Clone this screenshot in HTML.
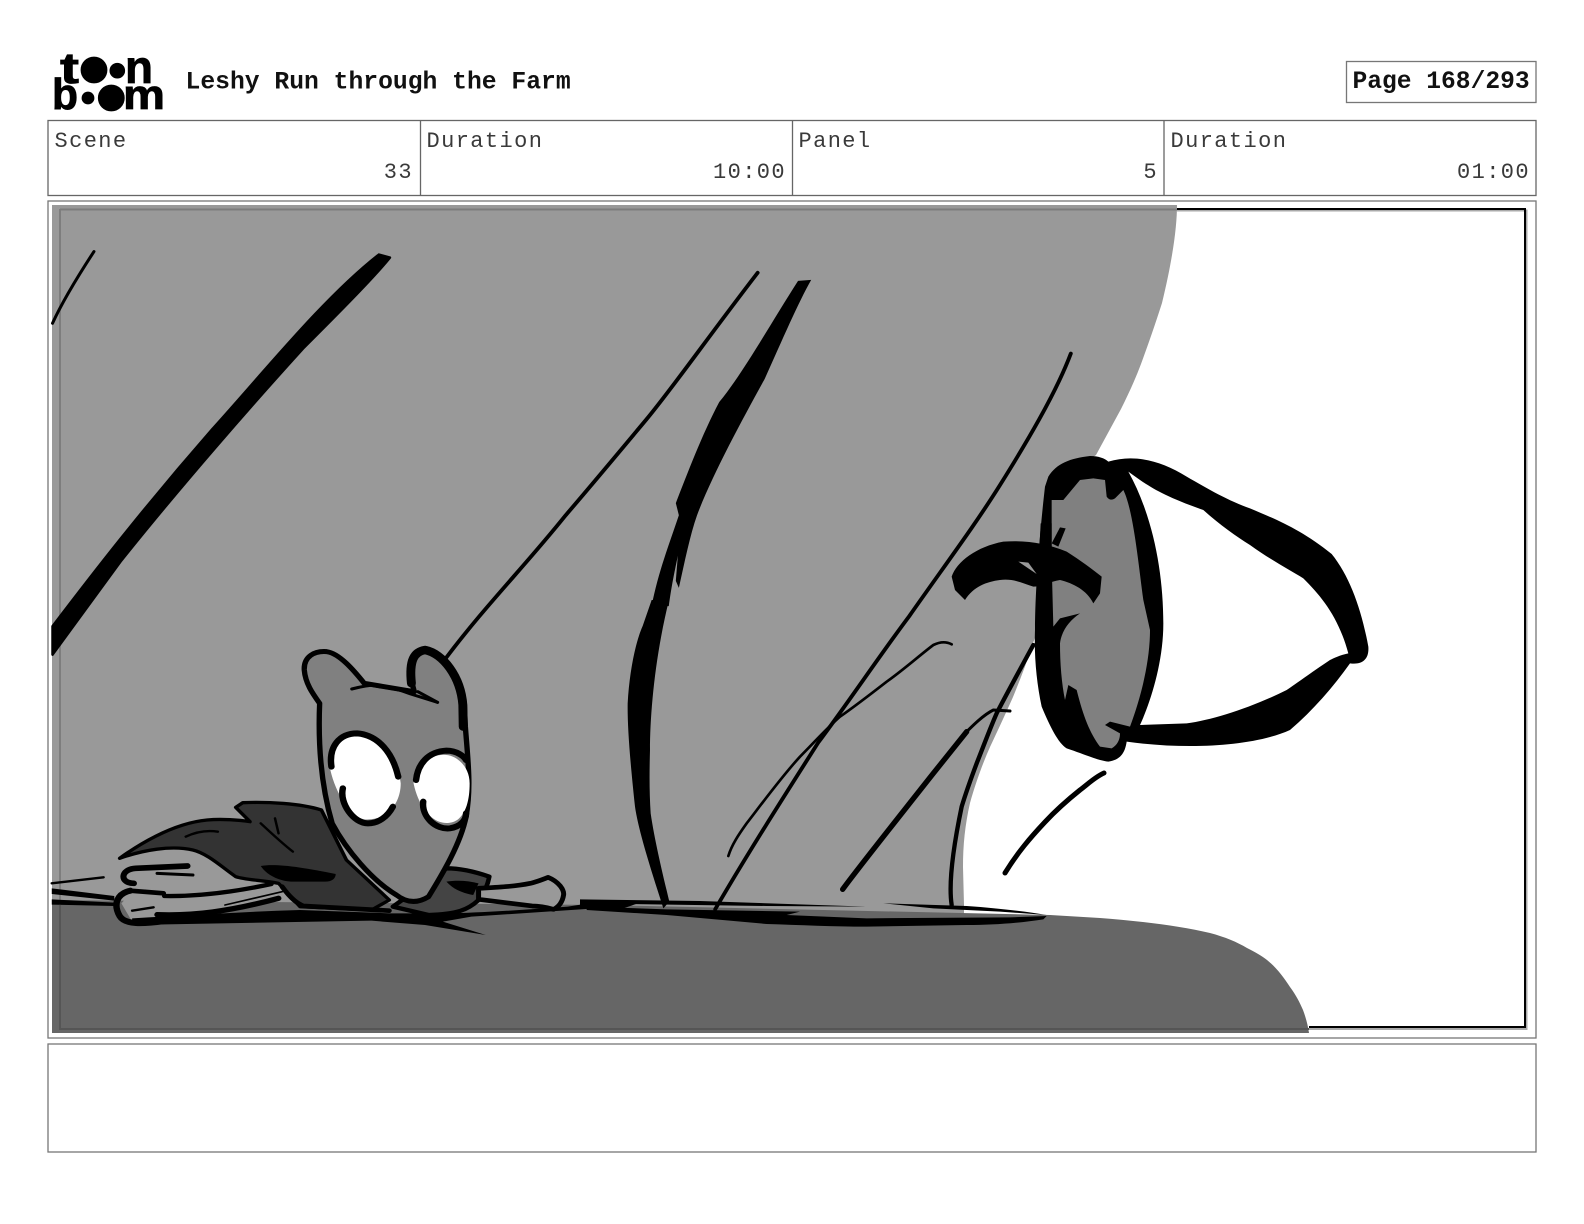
<!DOCTYPE html>
<html><head><meta charset="utf-8"><title>Leshy Run through the Farm</title>
<style>html,body{margin:0;padding:0;background:#fff}svg{display:block}
.m{font-family:"Liberation Mono",monospace}
.l{font-size:22px;letter-spacing:1.4px;fill:#3a3a3a;font-weight:400}
.b{font-weight:700;fill:#111}
.f{fill:#000;stroke:none}
.s{fill:none;stroke:#000;stroke-linecap:round;stroke-linejoin:round}
</style></head><body>
<svg width="1584" height="1224" viewBox="0 0 1584 1224" xmlns="http://www.w3.org/2000/svg">
<rect width="1584" height="1224" fill="#fff"/>
<!-- logo -->
<g fill="#000" stroke="#000" stroke-width=".8">
<text x="60" y="83" font-family="Liberation Sans,sans-serif" font-weight="700" font-size="44" textLength="19" lengthAdjust="spacingAndGlyphs">t</text>
<circle cx="94" cy="70" r="13"/><circle cx="117.3" cy="70.7" r="7.4"/>
<text x="125" y="83" font-family="Liberation Sans,sans-serif" font-weight="700" font-size="46" textLength="28" lengthAdjust="spacingAndGlyphs">n</text>
<text x="52" y="109" font-family="Liberation Sans,sans-serif" font-weight="700" font-size="44" textLength="26" lengthAdjust="spacingAndGlyphs">b</text>
<circle cx="88" cy="98" r="6"/><circle cx="111.3" cy="98" r="13"/>
<text x="123" y="109" font-family="Liberation Sans,sans-serif" font-weight="700" font-size="42" textLength="42" lengthAdjust="spacingAndGlyphs">m</text>
</g>
<text class="m b" x="185.500" y="88.500" font-size="24.7">Leshy Run through the Farm</text>
<rect x="1346.500" y="61.500" width="189.500" height="41" fill="#fff" stroke="#777" stroke-width="1.300"/>
<text class="m b" x="1352.500" y="88" font-size="24.6">Page 168/293</text>
<!-- info table -->
<rect x="48" y="120.500" width="1488" height="75" fill="#fff" stroke="#666" stroke-width="1.300"/>
<path d="M420.500 120.500V195.500M792.500 120.500V195.500M1164 120.500V195.500" stroke="#666" stroke-width="1.300"/>
<text class="m l" x="54.500" y="147">Scene</text>
<text class="m l" x="426.500" y="147">Duration</text>
<text class="m l" x="798.500" y="147">Panel</text>
<text class="m l" x="1170.500" y="147">Duration</text>
<text class="m l" x="413" y="178" text-anchor="end">33</text>
<text class="m l" x="786" y="178" text-anchor="end">10:00</text>
<text class="m l" x="1158" y="178" text-anchor="end">5</text>
<text class="m l" x="1530" y="178" text-anchor="end">01:00</text>
<!-- panel frame and notes -->
<rect x="48" y="201" width="1488" height="837" fill="#fff" stroke="#777" stroke-width="1.300"/>
<rect x="48" y="1044" width="1488" height="108" fill="#fff" stroke="#777" stroke-width="1.300"/>
<!-- black camera frame -->
<path d="M1177 210.500H1526.500V1029H1309" fill="none" stroke="#aaa" stroke-width="2"/>
<path d="M1177 209H1525V1027H1309" fill="none" stroke="#000" stroke-width="2"/>
<!-- fills -->
<path fill="#999" d="M52 205H1177C1177 228 1172 262 1162 303C1155 325 1148 345 1141 364C1135 380 1128 395 1121 409L1096 455L1060 480L1050 530L1050 600L1033 643C1027 662 1020 680 1013 697C1005 715 998 730 990 747C982 765 975 785 970 803C965 825 963 845 963 867L964 905L964 925H52Z"/>
<path fill="#666" d="M52 900L600 905L1050 915L1100 918C1140 921 1180 926 1210 933C1225 937 1237 942 1247 948C1255 952 1262 956 1267 960C1277 968 1284 978 1290 987C1296 995 1300 1003 1303 1010C1306 1018 1308 1026 1309 1033H52Z"/>
<path d="M60 209.500H1177" stroke="#7d7d7d" stroke-width="2" fill="none"/>
<path d="M60 905V1029H1309" stroke="#555" stroke-width="2" fill="none"/>
<path d="M60 209V905" stroke="#7d7d7d" stroke-width="2" fill="none"/>
<!-- background strokes, display-scale coords -->
<g transform="scale(1.0102)">
<path class="s" stroke-width="3" d="M52 320C62 298 78 272 93 249"/>
<path d="M52 648V620C90 570 140 505 210 425C260 370 320 295 375 252L386 255C370 275 330 315 300 345C250 400 180 480 120 555Z" fill="#000" stroke="#000" stroke-width="2.500" stroke-linejoin="round"/>
<path class="s" stroke-width="3.800" d="M441 652C480 600 520 560 560 510C590 475 615 445 640 415C665 385 700 335 750 270"/>
<path class="f" d="M645 600C652 565 662 540 672 510L669 498C680 470 695 430 712 398C735 370 760 325 790 278L803 277C790 300 775 335 757 375C735 415 705 470 690 510C683 530 678 555 672 582L669 575L671 550C668 565 665 578 662 600Z"/>
<path class="s" stroke-width="3.800" d="M708 900C740 845 775 790 810 735C840 695 870 650 900 610C935 560 965 520 990 480C1015 440 1045 390 1060 350"/>
</g>
<!-- zoom 6 details -->
<g transform="translate(600 600) scale(.33333)">
<path class="f" d="M155 0L128 78C105 130 88 220 83 310C82 380 90 480 105 620C115 690 150 800 190 925L208 905C195 850 165 730 152 640C148 580 148 520 150 450C150 340 165 170 207 0Z"/>
<path class="s" stroke-width="8" d="M385 768C395 735 415 705 440 670C490 605 545 530 600 470C640 430 680 385 720 350C770 315 815 280 860 245C910 210 960 165 1000 135C1020 125 1040 125 1055 133"/>
<path class="s" stroke-width="16" d="M728 868C770 810 850 710 1000 520L1100 395"/>
<path class="s" stroke-width="9" d="M1090 405C1120 375 1150 345 1180 330L1230 333"/>
<path class="s" stroke-width="13" d="M1055 915C1045 850 1060 740 1085 620C1100 570 1115 530 1130 490C1150 440 1170 385 1190 340C1210 300 1270 190 1300 135"/>
<path class="f" d="M-60 898L300 903L800 920L500 918L70 912L-60 912Z"/>
<path class="f" d="M-60 905L120 908L70 925L-60 918Z"/>
<path class="f" d="M-40 920L200 928L600 935L560 945L800 955L1230 952L1340 948L1330 958C1250 970 1180 975 1100 975L800 980C700 980 600 975 500 972L200 945L-40 930Z"/>
<path class="f" d="M850 910L1100 918C1200 925 1280 935 1340 945L1200 935L1000 925Z"/>
</g>
<path class="s" stroke-width="5" d="M1005 873C1018 852 1030 838 1045 822C1058 808 1070 798 1080 790C1088 784 1095 777 1104 773"/>
<!-- big eye, zoom 3 coords -->
<g transform="translate(920 430) scale(.33333)">
<path class="f" d="M385 140C410 100 450 85 510 78C535 78 555 85 565 95C640 72 720 90 800 140C860 175 930 215 990 235C1060 265 1140 295 1235 372C1290 440 1325 540 1345 650C1348 690 1325 705 1290 700C1240 770 1180 840 1110 900C1000 950 800 960 620 935C615 970 600 990 565 995C530 990 500 975 440 955C415 940 390 890 365 830C350 760 342 680 345 600C345 480 360 300 375 170Z"/>
<path fill="#fff" d="M625 125C680 165 720 195 850 240C900 285 950 320 990 345C1060 395 1110 420 1150 445C1205 500 1255 560 1285 670C1260 675 1240 685 1230 690C1170 730 1130 760 1100 780C1000 830 880 870 800 880L660 885C690 820 730 700 730 580C730 430 700 260 625 125Z"/>
<path fill="#808080" d="M395 210L430 210L480 150L520 145L555 150L560 200Q570 215 585 205L610 180C640 240 655 400 670 510L690 600C690 700 660 810 630 890L570 875L555 885L600 910Q600 940 575 955L540 950C510 910 490 860 470 780L445 765L435 810C425 760 420 700 420 640C425 600 450 570 480 550L420 565L400 590L395 400Z"/>
<path class="f" d="M95 440C110 395 170 350 250 335C320 330 380 340 440 365C480 390 520 420 545 440L540 490L520 520C500 480 460 460 420 450C390 455 360 470 340 470C310 460 280 445 240 450C200 455 160 470 135 510L105 480Z"/>
<path fill="#999" d="M295 395L325 398L350 432Z"/>
<path class="f" d="M395 340L420 292L437 295L415 350Z"/>
<path class="f" d="M362 280H395V600H346Z"/>
</g>
<!-- cat, zoom 2 coords -->
<g transform="translate(50 620) scale(.35714 .33333)">
<path class="s" stroke-width="7" d="M5 790L150 772"/>
<path class="f" d="M5 805L180 828V842L5 822Z"/>
<path class="f" d="M5 838L180 848V858L5 854Z"/>
<!-- tail/body -->
<path fill="#333" stroke="#000" stroke-width="10" stroke-linejoin="round" d="M195 715C240 680 340 610 440 600C480 596 530 600 560 605L520 562L540 548C610 545 700 550 760 570L830 720L950 840L900 870L700 860L640 790C590 780 550 780 520 770C480 740 440 700 400 690C340 675 260 690 195 715Z"/>
<!-- back legs -->
<path fill="#999" stroke="none" d="M230 760L380 745L620 800L620 820L330 820L230 790Z"/>
<path class="s" stroke-width="17" d="M235 790C195 790 195 748 240 745L385 738"/>
<path class="s" stroke-width="9" d="M300 760L400 765"/>
<path fill="#999" stroke="none" d="M200 850L230 815L420 830L640 800L650 830L500 870L320 895L230 905Z"/>
<path class="s" stroke-width="18" d="M225 812C190 820 175 850 195 888C210 915 260 912 320 903"/>
<path class="s" stroke-width="14" d="M225 812L318 820"/>
<path class="s" stroke-width="13" d="M320 828C420 830 520 815 620 792"/>
<path class="s" stroke-width="16" d="M300 884C400 888 500 875 640 835"/>
<path class="s" stroke-width="5" d="M490 855L650 815"/>
<path class="s" stroke-width="7" d="M230 872L290 862"/>
<!-- body details -->
<path class="f" d="M590 738C630 730 700 740 800 762C800 775 790 785 770 785L680 785C650 785 610 770 590 738Z"/>
<path class="s" stroke-width="7" d="M590 610C620 640 650 670 680 695M630 595L640 640M380 650C410 635 440 630 470 635"/>
<path class="s" stroke-width="14" d="M650 800C670 830 690 850 710 858L950 872"/>
<!-- right body -->
<path fill="#444" stroke="#000" stroke-width="13" stroke-linejoin="round" d="M1110 745C1150 745 1190 755 1230 770C1225 800 1210 830 1200 840C1170 870 1140 882 1060 885L960 860Z"/>
<path class="f" d="M1110 785C1140 780 1170 782 1200 790L1185 825C1160 820 1130 810 1110 785Z"/>
<!-- arm -->
<path fill="#999" stroke="#000" stroke-width="14" stroke-linejoin="round" d="M1200 805C1250 802 1300 800 1345 790C1365 785 1380 778 1395 772C1425 785 1440 810 1438 825C1435 845 1425 860 1410 868C1390 862 1370 858 1350 858L1200 838Z"/>
<!-- floor line -->
<path class="f" d="M230 895C400 885 550 875 700 870L950 880L1130 880C1250 875 1350 868 1450 860L1568 840V862L1180 890L1100 905L1220 945L1050 915L900 902L230 915Z"/>
<!-- head -->
<path fill="#808080" stroke="#000" stroke-width="15" stroke-linejoin="round" d="M755 250C735 220 715 190 712 150C710 110 740 92 775 95C810 100 850 150 880 190L1020 215C1005 160 1010 100 1050 85C1100 95 1150 170 1160 250L1163 320C1170 420 1180 500 1165 590C1150 670 1100 760 1060 830C1030 850 1000 850 970 825C900 780 830 690 790 610C760 500 750 380 755 250Z"/>
<path fill="#808080" d="M890 200L1015 222L1090 255L1150 300L1150 330H770L765 255L780 235Z"/>
<path class="s" stroke-width="9" d="M845 207C870 200 895 195 915 195C950 200 985 212 1010 222L1085 247"/>
<path class="s" stroke-width="25" d="M1012 190C1005 120 1020 95 1050 90C1100 100 1150 170 1156 255L1157 320"/>
<path fill="#808080" d="M1040 130L1100 165L1130 230L1090 245L1030 215Z"/>
<path class="s" stroke-width="9" d="M1030 215L1085 247"/>
<!-- eyes -->
<path fill="#fff" d="M785 450C785 380 820 345 860 345C920 350 975 420 982 490C982 530 965 560 950 575C930 595 900 600 880 598C840 590 800 520 785 450Z"/>
<path fill="#fff" d="M1018 490C1025 430 1070 400 1110 405C1140 408 1175 440 1175 490C1175 540 1165 580 1140 600C1125 610 1110 610 1100 608C1060 600 1030 550 1018 490Z"/>
<g class="s" stroke-width="18">
<path d="M788 440C780 380 810 340 860 340C920 345 960 400 975 470"/>
<path d="M820 505C810 550 850 610 890 610C920 610 945 590 960 560"/>
<path d="M1025 480C1030 430 1060 395 1110 392C1140 392 1160 410 1165 420"/>
<path d="M1045 545C1040 590 1080 630 1120 625C1150 620 1165 600 1165 580"/>
</g>
</g>
</svg>
</body></html>
